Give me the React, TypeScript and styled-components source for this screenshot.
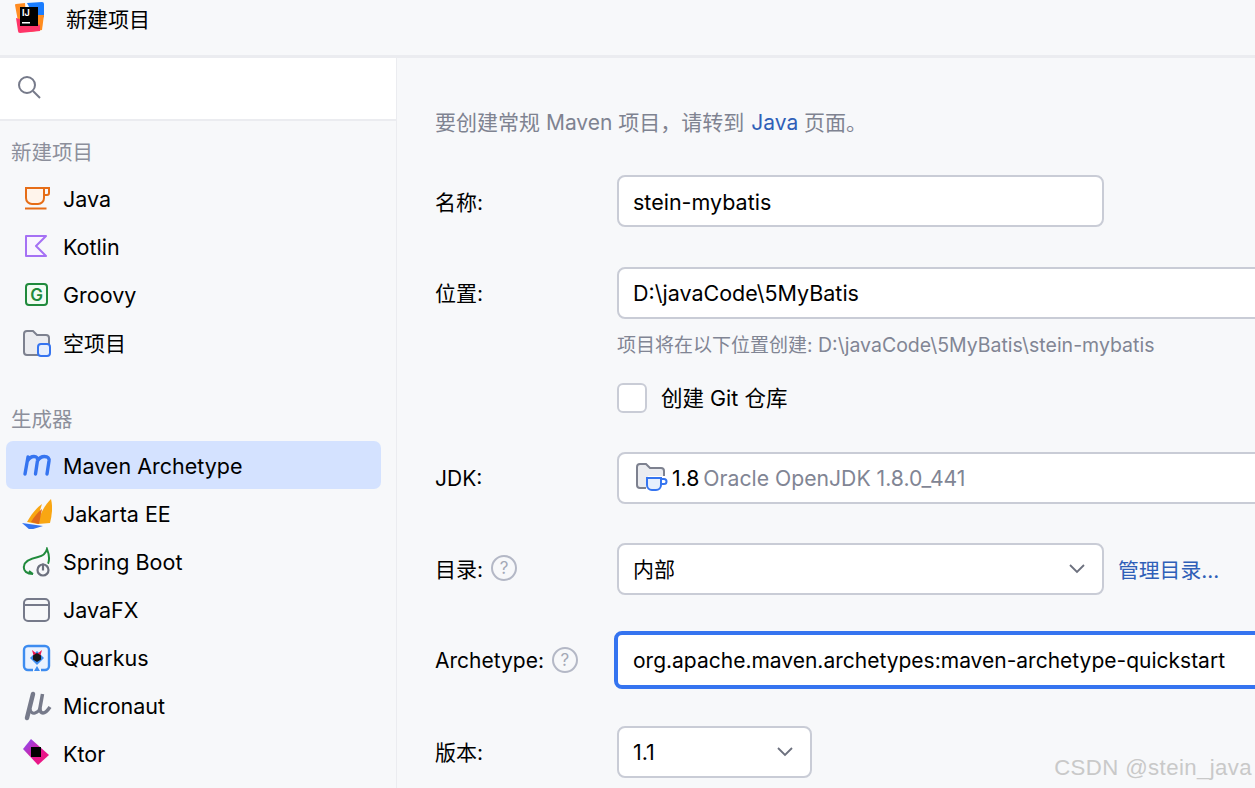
import React from "react";
import styled, { createGlobalStyle } from "styled-components";

const Global = createGlobalStyle`
  html, body { margin: 0; padding: 0; background: #f7f8fa; }
  * { box-sizing: border-box; }
  body { font-family: Inter, "Noto Sans CJK SC", sans-serif; color: #000; }
`;
const Page = styled.div`
  width: 1255px; height: 788px; overflow: hidden; position: relative;
  display: flex; flex-direction: column; background: #f7f8fa;
  font-family: Inter, "Noto Sans CJK SC", sans-serif; font-size: 21px;
`;
const TitleBar = styled.header`
  height: 58px; flex: none; border-bottom: 3px solid #ebecf0;
  display: flex; align-items: flex-start; padding: 2px 0 0 14px; gap: 21px;
`;
const TitleText = styled.div`
  font-size: 21px; line-height: 36px;
`;
const Body = styled.div`display: flex; flex: 1; min-height: 0;`;
const Sidebar = styled.aside`
  width: 397px; flex: none; border-right: 1px solid #ebecf0; overflow: hidden;
`;
const SearchBar = styled.div`
  height: 63px; background: #fff; border-bottom: 2px solid #ebecf0;
  display: flex; align-items: center; padding: 0 0 4px 16px;
`;
const SectionTitle = styled.div<{ $top: number; $bottom: number }>`
  font-size: 20.5px; line-height: 30px; color: #8c8f9b; padding-left: 11px;
  margin-top: ${p => p.$top}px; margin-bottom: ${p => p.$bottom}px;
`;
const Item = styled.div<{ $active?: boolean }>`
  height: 48px; margin: 0 15px 0 6px; padding-left: 16px; border-radius: 7px;
  display: flex; align-items: center; gap: 11px; font-size: 21.5px;
  background: ${p => (p.$active ? "#d4e2ff" : "transparent")};
  svg { flex: none; }
`;
const LowerGroup = styled.div`
  ${Item} { padding-top: 2px; }
`;
const CjkItemText = styled.span`font-size: 21px; padding-bottom: 2px;`;
const Main = styled.main`flex: 1; min-width: 0; padding: 0 0 0 38px; overflow: hidden;`;
const Hint = styled.div`font-size: 21px; line-height: 30px; color: #7f8391; margin-top: 50px; white-space: nowrap;`;
const HintLink = styled.span`color: #2f5fb8; margin-left: 1px;`;
const Row = styled.div<{ $top: number }>`
  display: flex; align-items: center; margin-top: ${p => p.$top}px; white-space: nowrap;
`;
const Label = styled.div<{ $cjk?: boolean }>`
  width: 182px; flex: none; font-size: 21px; display: flex; align-items: center; gap: 8px;
  padding-bottom: ${p => (p.$cjk ? 2 : 0)}px;
`;
const Field = styled.div<{ $w: number }>`
  width: ${p => p.$w}px; flex: none; height: 52px; background: #fff;
  border: 2px solid #c9ccd6; border-radius: 8px; padding: 0 14px;
  display: flex; align-items: center; justify-content: space-between; font-size: 21.5px;
`;
const FocusField = styled(Field)`
  border: 4px solid #3574f0; height: 58px; margin-left: -3px; padding: 0 15px; border-radius: 8px; font-size: 21px;
`;
const LowValue = styled.span`padding-top: 2px;`;
const CjkValue = styled.span`font-size: 21px; padding-bottom: 2px;`;
const Dim = styled.span`color: #818594;`;
const Sub = styled.div`
  font-size: 19.5px; line-height: 28px; color: #818594; margin: 12px 0 0 182px; white-space: nowrap;
`;
const SubCjk = styled.span`font-size: 19px;`;
const Check = styled.div`
  width: 30px; height: 30px; border: 2px solid #c9ccd6; border-radius: 6px; background: #fff; flex: none;
`;
const CheckRow = styled.div`
  display: flex; align-items: center; gap: 14px; margin: 21px 0 0 182px; font-size: 21.5px;
`;
const CheckText = styled.span`padding-bottom: 2px;`;
const Help = styled.span`
  width: 26px; height: 26px; border: 2px solid #b4b8c6; border-radius: 50%; color: #a4a8b6;
  font-size: 17px; display: inline-flex; align-items: center; justify-content: center;
`;
const Link = styled.span`color: #2f5fb8; margin-left: 14px; font-size: 20.8px; padding-bottom: 1px;`;
const JdkValue = styled.div`display: flex; align-items: center; gap: 4px; margin-left: 3px; font-size: 21.2px;`;
const ChevronBox = styled.span`display: flex; margin-right: 2px;`;
const Watermark = styled.div`
  position: absolute; right: 3px; bottom: 7px; font: 22.2px "Liberation Sans", sans-serif;
  color: #c9c9c9; letter-spacing: 0.4px;
`;

const Chevron = () => (
  <ChevronBox>
    <svg width="18" height="12" viewBox="0 0 18 12" fill="none" stroke="#6c707e" strokeWidth="1.8"><path d="M2 2l7 7 7-7" /></svg>
  </ChevronBox>
);
const Logo = () => (
  <svg width="31" height="31" viewBox="0 0 31 31">
    <path d="M1 3q0-1 1-1l9-1 2 26-7 3z" fill="#ff8c22" />
    <path d="M13 1l15-1q2 0 2 2v13l-8 3z" fill="#1a7dff" />
    <path d="M20 13l10 0-2 15-12 2z" fill="#ff8c1e" />
    <path d="M2 16l2 13q0 2 2 2l20-2 0-6z" fill="#ff3568" />
    <rect x="6" y="5" width="18" height="19" fill="#000" />
    <text x="8" y="14" fontSize="9" fontWeight="700" fill="#fff" fontFamily="Inter, sans-serif">IJ</text>
    <rect x="8" y="20" width="8" height="1.5" fill="#fff" />
  </svg>
);
const Search = () => (
  <svg width="26" height="26" viewBox="0 0 26 26" fill="none" stroke="#767a8a" strokeWidth="2"><circle cx="11" cy="11" r="8" /><path d="M17 17l7 7" /></svg>
);
const Java = () => (
  <svg width="30" height="30" viewBox="0 0 30 30" fill="none" stroke="#e66d17" strokeWidth="2">
    <path d="M4 4h18v10a6 6 0 0 1-6 6h-6a6 6 0 0 1-6-6z" fill="#fff4eb" />
    <path d="M22 4h5v5a2 2 0 0 1-2 2h-3" />
    <path d="M3 24.5h21.500" />
  </svg>
);
const Kotlin = () => (
  <svg width="30" height="30" viewBox="0 0 30 30"><path d="M4 4h20l-10 10 10 10H4z" fill="#faf5ff" stroke="#a571f4" strokeWidth="2" strokeLinejoin="round" /></svg>
);
const Groovy = () => (
  <svg width="30" height="30" viewBox="0 0 30 30">
    <rect x="4" y="4" width="21" height="21" rx="3" fill="#f2fcf3" stroke="#208a3c" strokeWidth="2" />
    <text x="14.5" y="20.500" textAnchor="middle" fontSize="17" fontWeight="600" fill="#208a3c" fontFamily="Inter, sans-serif">G</text>
  </svg>
);
const Empty = () => (
  <svg width="30" height="32" viewBox="0 0 30 32">
    <path d="M2 7a3 3 0 0 1 3-3h6l4 4h9a3 3 0 0 1 3 3v14a3 3 0 0 1-3 3H5a3 3 0 0 1-3-3z" fill="#ebecf0" stroke="#7d818f" strokeWidth="2" />
    <rect x="16" y="17" width="12" height="12" rx="3" fill="#e7effd" stroke="#3574f0" strokeWidth="2" />
  </svg>
);
const Maven = () => (
  <svg width="30" height="30" viewBox="0 0 30 30" fill="none" stroke="#3574f0" strokeWidth="3.400" strokeLinecap="round">
    <path d="M3 23L6 6M5.500 10Q8 5.500 12 5.500Q16 5.500 15.500 9.500L13.500 23M15.500 10Q18 5.500 22.500 5.500Q27.500 5.500 27 10L25 23" />
  </svg>
);
const Jakarta = () => (
  <svg width="30" height="30" viewBox="0 0 30 30">
    <path d="M29 0c2 8 1 16-1 24l-12 1c2-12 8-20 13-25z" fill="#f9a612" />
    <path d="M20 5c-2 6-4 13-4 20l-11-2c4-7 9-14 15-18z" fill="#f9a612" />
    <path d="M20 10l-3 15-8-2c3-5 7-10 11-13z" fill="#e06a1c" />
    <path d="M0 24l21 3-13 4z" fill="#3574f0" />
  </svg>
);
const Spring = () => (
  <svg width="30" height="30" viewBox="0 0 30 30" fill="none">
    <path d="M11 27C5 27 1 24 2 19c1-6 9-8 14-9 5-1 8-4 9-8 2 5 3 10 1 15M11 27l-4-3" stroke="#208a3c" strokeWidth="2" />
    <circle cx="21" cy="23" r="8" fill="#f7f8fa" />
    <circle cx="21" cy="23" r="5.500" stroke="#6c707e" strokeWidth="2.200" />
    <path d="M21 16.500v7" stroke="#6c707e" strokeWidth="2.200" />
  </svg>
);
const JavaFX = () => (
  <svg width="30" height="30" viewBox="0 0 30 30" fill="none" stroke="#767a8a" strokeWidth="2">
    <rect x="2" y="4" width="25" height="22" rx="4" fill="#f7f8fa" /><path d="M2 10h25" />
  </svg>
);
const Quarkus = () => (
  <svg width="30" height="30" viewBox="0 0 30 30">
    <path d="M11 27H6a4 4 0 0 1-4-4V7a4 4 0 0 1 4-4h17a4 4 0 0 1 4 4v16a4 4 0 0 1-4 4h-4" fill="#eaf2ff" stroke="#3d8cf0" strokeWidth="2.400" />
    <path d="M15 23l-3 5h6z" fill="#3d8cf0" />
    <path d="M8 15l7-7 7 7-7 7z" fill="#3d8cf0" />
    <path d="M10 7l5 4-3 3zM20 7l-5 4 3 3z" fill="#f0184f" />
    <path d="M15 10l4 2.500v4L15 19l-4-2.500v-4z" fill="#1a1a1a" />
  </svg>
);
const Micronaut = () => (
  <svg width="30" height="30" viewBox="0 0 30 30" fill="none" stroke="#767a8a">
    <path d="M11 3L5 27" strokeWidth="4.500" strokeLinecap="round" />
    <path d="M8 18Q9 23 13 22Q17 21 18 17" strokeWidth="3" />
    <path d="M20.500 3L18 17Q18 22 21 22Q24 22 28 16" strokeWidth="3.500" />
  </svg>
);
const Ktor = () => (
  <svg width="30" height="30" viewBox="0 0 30 30">
    <defs><linearGradient id="kt" x1="0" y1="0" x2="1" y2="1"><stop offset="0" stopColor="#7f52ff" /><stop offset=".6" stopColor="#e6168f" /><stop offset="1" stopColor="#f01a78" /></linearGradient></defs>
    <path d="M9 0L1 10l15 16 11-10z" fill="url(#kt)" />
    <rect x="9" y="8" width="10" height="10" fill="#000" />
  </svg>
);
const Cup = () => (
  <svg width="32" height="32" viewBox="0 0 32 32">
    <path d="M1 5a3 3 0 0 1 3-3h6l4 4h11a3 3 0 0 1 3 3v5H12v12H4a3 3 0 0 1-3-3z" fill="#ebecf0" />
    <path d="M10 26H4a3 3 0 0 1-3-3V5a3 3 0 0 1 3-3h6l4 4h11a3 3 0 0 1 3 3v5" fill="none" stroke="#7d818f" strokeWidth="2" />
    <path d="M11 16h14v7a5 5 0 0 1-5 5h-4a5 5 0 0 1-5-5z" fill="#e7effd" stroke="#3574f0" strokeWidth="2" />
    <path d="M25 17h3a1.500 1.500 0 0 1 0 5h-3" fill="none" stroke="#3574f0" strokeWidth="2" />
  </svg>
);

export default function App() {
  return (
    <Page>
      <Global />
      <TitleBar><Logo /><TitleText>新建项目</TitleText></TitleBar>
      <Body>
        <Sidebar>
          <SearchBar><Search /></SearchBar>
          <SectionTitle $top={17} $bottom={7}>新建项目</SectionTitle>
          <Item><Java />Java</Item>
          <Item><Kotlin />Kotlin</Item>
          <Item><Groovy />Groovy</Item>
          <Item><Empty /><CjkItemText>空项目</CjkItemText></Item>
          <SectionTitle $top={38} $bottom={6}>生成器</SectionTitle>
          <LowerGroup>
            <Item $active><Maven />Maven Archetype</Item>
            <Item><Jakarta />Jakarta EE</Item>
            <Item><Spring />Spring Boot</Item>
            <Item><JavaFX />JavaFX</Item>
            <Item><Quarkus />Quarkus</Item>
            <Item><Micronaut />Micronaut</Item>
            <Item><Ktor />Ktor</Item>
          </LowerGroup>
        </Sidebar>
        <Main>
          <Hint>要创建常规 Maven 项目，请转到 <HintLink>Java</HintLink> 页面。</Hint>
          <Row $top={37}><Label>名称:</Label><Field $w={487}><LowValue>stein-mybatis</LowValue></Field></Row>
          <Row $top={40}><Label $cjk>位置:</Label><Field $w={800}>D:\javaCode\5MyBatis</Field></Row>
          <Sub><SubCjk>项目将在以下位置创建:</SubCjk> D:\javaCode\5MyBatis\stein-mybatis</Sub>
          <CheckRow><Check /><CheckText>创建 Git 仓库</CheckText></CheckRow>
          <Row $top={38}><Label>JDK:</Label><Field $w={800}><JdkValue><Cup />1.8 <Dim>Oracle OpenJDK 1.8.0_441</Dim></JdkValue></Field></Row>
          <Row $top={39}><Label $cjk>目录: <Help>?</Help></Label><Field $w={487}><CjkValue>内部</CjkValue><Chevron /></Field><Link>管理目录...</Link></Row>
          <Row $top={36}><Label>Archetype: <Help>?</Help></Label><FocusField $w={800}>org.apache.maven.archetypes:maven-archetype-quickstart</FocusField></Row>
          <Row $top={37}><Label $cjk>版本:</Label><Field $w={195}>1.1<Chevron /></Field></Row>
        </Main>
      </Body>
      <Watermark>CSDN @stein_java</Watermark>
    </Page>
  );
}
